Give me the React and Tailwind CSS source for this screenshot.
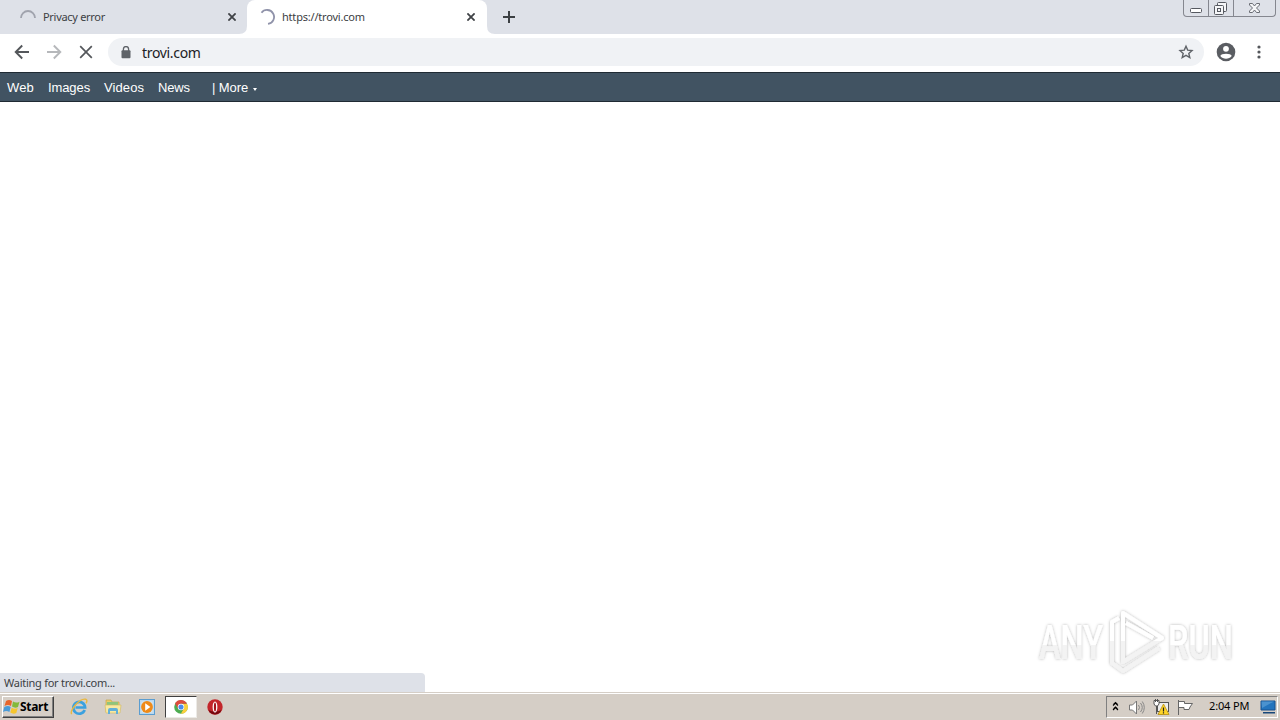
import React from 'react';

const Spinner = ({ d, color }) => (
  <svg width="16" height="16" viewBox="0 0 16 16" fill="none" className="shrink-0">
    <path d={d} stroke={color} strokeWidth="1.8" />
  </svg>
);

const CloseIcon = ({ className }) => (
  <svg width="8" height="8" viewBox="0 0 8 8" className={className}>
    <path d="M.4.4l7.2 7.2M7.6.4L.4 7.6" stroke="#3f4246" strokeWidth="1.8" />
  </svg>
);

const WindowButtons = () => (
  <div className="ml-auto mr-[4px] h-[17px] w-[93px] flex border border-t-0 border-[#85878f] rounded-b-[4px] overflow-hidden">
    <div className="w-[25px] border-r border-[#85878f]">
      <svg width="24" height="16" viewBox="0 0 24 16" fill="none">
        <rect x="6.5" y="8.5" width="11" height="4" rx="1" fill="#fff" stroke="#565960" />
      </svg>
    </div>
    <div className="w-[25px] border-r border-[#85878f]">
      <svg width="24" height="16" viewBox="0 0 24 16" fill="#f5f6f8" stroke="#565960">
        <rect x="8.5" y="2.5" width="9" height="9" rx="1" />
        <rect x="5.5" y="5.5" width="9" height="9" rx="1" />
        <rect x="8.5" y="8.5" width="3" height="3" />
      </svg>
    </div>
    <div className="flex-1">
      <svg width="41" height="16" viewBox="0 0 41 16">
        <path d="M15.5 3.5h3l2 2.5 2-2.5h3v1.5L22.5 8l3 3v1.5h-3l-2-2.5-2 2.5h-3V11l3-3-3-3z" fill="#f5f6f8" stroke="#6a6d74" />
      </svg>
    </div>
  </div>
);

const TabStrip = () => (
  <div className="h-[34px] bg-[#dee1e8] flex text-[11px] text-[#3c4043]">
    <div className="w-[247px] flex items-center pl-[20px] pr-[15px] relative">
      <Spinner d="M1 9A7 7 0 0 1 15 9" color="#a0a3ad" />
      <span className="ml-[7px] whitespace-nowrap tracking-[-0.3px]">Privacy error</span>
      <CloseIcon className="ml-auto mr-[-4px]" />
      <svg width="8" height="8" className="absolute right-0 bottom-0">
        <path d="M8 0v8H0Q8 8 8 0" fill="#fff" />
      </svg>
    </div>
    <div className="w-[240px] bg-white rounded-t-[8px] flex items-center pl-[12px] pr-[12px]">
      <Spinner d="M2.5 3.7A7 7 0 1 1 9 14.9" color="#9093aa" />
      <span className="ml-[7px] whitespace-nowrap tracking-[-0.2px]">https://trovi.com</span>
      <CloseIcon className="ml-auto" />
    </div>
    <div className="w-[43px] relative">
      <svg width="8" height="8" className="absolute left-0 bottom-0">
        <path d="M0 0v8h8Q0 8 0 0" fill="#fff" />
      </svg>
      <svg width="12" height="12" className="mt-[11px] ml-[16px]">
        <path d="M6 0v12M0 6h12" stroke="#3c4043" strokeWidth="2" />
      </svg>
    </div>
    <WindowButtons />
  </div>
);

const Toolbar = () => (
  <div className="h-[38px] bg-white flex items-center pb-[2px] pl-[14px]">
    <svg width="80" height="16" viewBox="0 0 80 16" fill="none" strokeWidth="1.9" className="shrink-0">
      <path d="M15 8H2M8.2 1.5L1.7 8l6.5 6.5" stroke="#54575b" />
      <path d="M33 8h13M39.8 1.5L46.3 8l-6.5 6.5" stroke="#b6b8bb" />
      <path d="M66.2 2.2l11.6 11.6M77.8 2.2L66.2 13.8" stroke="#54575b" strokeWidth="1.7" />
    </svg>
    <div className="ml-[14px] w-[1096px] h-[28px] rounded-full bg-[#f0f2f5] flex items-center pl-[13px] pr-[10px]">
      <svg width="10" height="13" viewBox="0 0 10 13" fill="none">
        <rect x="0.5" y="4.3" width="9" height="8" rx="1" fill="#5f6368" />
        <path d="M2.4 5V3.2a2.6 2.6 0 0 1 5.2 0V5" stroke="#5f6368" strokeWidth="1.3" />
      </svg>
      <span className="ml-[11px] text-[14px] text-[#202124] tracking-[-0.33px]">trovi.com</span>
      <svg width="16" height="16" viewBox="0 0 16 16" className="ml-auto">
        <path d="M8 2.2l1.7 3.9 4.3.4-3.2 2.9 1 4.2L8 11.4l-3.8 2.2 1-4.2L2 6.5l4.3-.4z" fill="none" stroke="#5f6368" strokeWidth="1.4" />
      </svg>
    </div>
    <svg width="20" height="20" viewBox="0 0 20 20" className="ml-[12px]">
      <circle cx="10" cy="10" r="9.3" fill="#5a5d62" />
      <circle cx="10" cy="6.8" r="2.9" fill="#fff" />
      <path d="M4.3 14c.5-3 11-3 11.4 0-2.6 3.5-8.8 3.5-11.4 0z" fill="#fff" />
    </svg>
    <svg width="4" height="14" viewBox="0 0 4 14" fill="#54575b" className="ml-[21px]">
      <circle cx="2" cy="2" r="1.6" />
      <circle cx="2" cy="7" r="1.6" />
      <circle cx="2" cy="12" r="1.6" />
    </svg>
  </div>
);

const NavBar = () => (
  <div className="h-[30px] bg-[#415362] border-y border-[#1f2a33] flex items-center pt-px text-[13px] text-white whitespace-nowrap font-['Liberation_Sans',sans-serif]">
    <span className="ml-[7px] w-[41px] tracking-[0.1px]">Web</span>
    <span className="w-[56px] tracking-[-0.1px]">Images</span>
    <span className="w-[54px] tracking-[0.1px]">Videos</span>
    <span className="w-[54px] tracking-[-0.15px]">News</span>
    <span className="tracking-[-0.1px]">| More</span>
    <svg width="4" height="3" className="ml-[5px] mt-[3px]">
      <path d="M0 0h4L2 3z" fill="#fff" />
    </svg>
  </div>
);

const Watermark = () => (
  <svg width="210" height="74" viewBox="0 0 210 74" className="absolute left-[1030px] top-[502px] overflow-visible">
    <defs>
      <linearGradient id="fade" x1="0" y1="0" x2="0" y2="1">
        <stop offset="0.55" stopColor="#fff" />
        <stop offset="0.55" stopColor="#f3f3f3" />
      </linearGradient>
      <linearGradient id="markFade" gradientUnits="userSpaceOnUse" x1="0" y1="0" x2="0" y2="74">
        <stop offset="0.5" stopColor="#fff" />
        <stop offset="0.5" stopColor="#f3f3f3" />
      </linearGradient>
      <filter id="glow" x="-10%" y="-20%" width="120%" height="140%">
        <feDropShadow dx="0" dy="0" stdDeviation="1.7" floodColor="#000" floodOpacity="0.3" />
      </filter>
    </defs>
    <g filter="url(#glow)" fontFamily="Roboto, sans-serif" fontSize="49" fontWeight="500" fill="url(#fade)">
      <text x="9" y="55" textLength="64" lengthAdjust="spacingAndGlyphs">ANY</text>
      <text x="138" y="55" textLength="65" lengthAdjust="spacingAndGlyphs">RUN</text>
      <g fill="none" stroke="url(#markFade)" strokeWidth="4" strokeLinejoin="round">
        <path d="M93 9v49l39-24z" />
        <path d="M89 14l-7 4v41l11 8 36-23M96 19l27 15" />
      </g>
    </g>
  </svg>
);

const StartFlag = () => (
  <svg width="17" height="16" viewBox="0 0 17 16">
    <path d="M3 2q3-2 6 0L8 7Q5 5 1.5 7z" fill="#e7652b" />
    <path d="M10 2.5q3 2 6.5.2L15 8q-3 1.5-6-.5z" fill="#83b939" />
    <path d="M1.3 8Q5 6 7.7 8l-1.3 5Q3.3 11 0 13z" fill="#4a9bd8" />
    <path d="M8.7 8.7q3 2 6 .4l-1.4 5q-3 1.5-6-.5z" fill="#f6c62e" />
  </svg>
);

const QuickLaunch = () => (
  <>
    <svg width="18" height="18" viewBox="0 0 18 18" fill="none" className="ml-[16px]">
      <path d="M14.7 12A5.9 5.9 0 1 1 15.1 9.5H5.5" stroke="#3ba1df" strokeWidth="2.7" />
      <path d="M1.7 16.2C-.5 13 9-.3 16 1.3c1.5.6.8 3 0 4" stroke="#e9b83e" strokeWidth="1.4" />
    </svg>
    <svg width="18" height="18" viewBox="0 0 18 18" className="ml-[16px]">
      <path d="M2 2h5l1 2h7v10H2z" fill="#e9cd69" stroke="#c9a845" strokeWidth=".7" />
      <path d="M3 4h11v4H3z" fill="#8ec57c" />
      <path d="M1 7h16l-1 8H2z" fill="#f8e9a1" stroke="#d1b961" strokeWidth=".6" />
      <path d="M4 16v-4q0-2 2-2h6q2 0 2 2v4h-2v-3H6v3z" fill="#61afd8" />
    </svg>
    <svg width="18" height="18" viewBox="0 0 18 18" className="ml-[16px]">
      <rect x="1.5" y="1.5" width="15" height="15" fill="#b9d8ef" stroke="#5b9dd0" />
      <rect x="3.5" y="3.5" width="11" height="11" fill="#d9e6ee" />
      <circle cx="9" cy="9" r="5.9" fill="#ef8a18" />
      <path d="M7.2 5.2l5.2 3.8-5.2 3.8z" fill="#fff" />
    </svg>
    <div className="ml-[9px] w-[32px] h-[22px] bg-white border border-t-[#404040] border-l-[#404040] border-r-[#eceae6] border-b-[#eceae6] flex items-center justify-center">
      <svg width="14" height="14" viewBox="0 0 16 16">
        <circle cx="8" cy="8" r="7.8" fill="#4cac51" />
        <path d="M8 4.3h6.9A7.8 7.8 0 0 1 7.8 15.8L11.3 9.8z" fill="#fbcf3c" />
        <path d="M1.2 4l3.6 6L8 4.3l6.8-.1A7.8 7.8 0 0 0 1.2 4z" fill="#dd4b3e" />
        <circle cx="8" cy="8" r="3.7" fill="#fff" />
        <circle cx="8" cy="8" r="2.9" fill="#4a8bec" />
      </svg>
    </div>
    <svg width="16" height="16" viewBox="0 0 16 16" className="ml-[10px]">
      <circle cx="8" cy="8" r="7.7" fill="#c3262b" />
      <path d="M1.5 11A7 7 0 0 0 14.5 11Q8 14 1.5 11z" fill="#76070d" />
      <ellipse cx="8" cy="8" rx="2.4" ry="5.5" fill="#fff" />
      <ellipse cx="8" cy="8" rx="1.1" ry="4.6" fill="#a3141b" />
    </svg>
  </>
);

const Tray = () => (
  <div className="ml-auto mr-[2px] w-[172px] h-[22px] border border-t-[#808080] border-l-[#808080] border-r-white border-b-white flex items-center">
    <svg width="88" height="20" viewBox="0 0 88 20" fill="none">
      <path d="M6 8.5l2.5-2.5L11 8.5M6 13l2.5-2.5L11 13M6.5 7.5l2-2 2 2M6.5 12l2-2 2 2" stroke="#000" strokeWidth="1.1" />
      <path d="M22.5 8h3l4-4v13l-4-4h-3z" fill="#fff" stroke="#777" />
      <path d="M31.5 8q2 2.5 0 5M33.5 6q3.5 4.5 0 9M35.3 4.5q4 6 0 12" stroke="#888" />
      <rect x="50.5" y="5.5" width="11" height="9" fill="#eee" stroke="#555" />
      <path d="M51 17h7" stroke="#555" />
      <path d="M47 3.5h5v3.5l-1.5 2h-2L47 7z" fill="#fff" stroke="#555" />
      <path d="M48.5 2v3M50.5 2v3M49.5 9v8" stroke="#555" />
      <path d="M56.5 7l5.5 10.5H51z" fill="#ffd529" stroke="#b99111" strokeWidth=".8" />
      <path d="M56.5 10.5v4M56.5 15.2v1.2" stroke="#222" strokeWidth="1.2" />
      <path d="M71.5 3v15M71.5 4.5h6v2h8l-2.5 3.5-1 2.5h-5v-2h-5.5" fill="#fff" stroke="#666" />
    </svg>
    <span className="ml-[14px] w-[42px] whitespace-nowrap text-[11px] text-black tracking-[-0.15px]">2:04 PM</span>
    <svg width="16" height="14" viewBox="0 0 16 14" className="ml-[9px]">
      <path d="M1 1h14v9H1z" fill="#2474bd" stroke="#18518e" />
      <path d="M1.5 1.5H14L2 8z" fill="#4b92cf" />
      <path d="M3 12h12v1.5H3z" fill="#174779" />
    </svg>
  </div>
);

const Taskbar = () => (
  <div className="h-[28px] bg-[#d5cec6] border-t border-[#d5cec6] shadow-[inset_0_1px_0_#fff] pt-px pb-px flex items-center">
    <div className="ml-[2px] w-[52px] h-[22px] border border-t-white border-l-white border-r-[#404040] border-b-[#404040] shadow-[inset_-1px_-1px_0_#808080] flex items-center">
      <StartFlag />
      <span className="text-[12px] font-bold text-black tracking-[-0.3px]">Start</span>
    </div>
    <QuickLaunch />
    <Tray />
  </div>
);

const App = () => (
  <div className="w-[1280px] h-[720px] overflow-hidden bg-white flex flex-col font-['Noto_Sans',sans-serif]">
    <TabStrip />
    <Toolbar />
    <NavBar />
    <div className="h-[590px] relative flex items-end">
      <Watermark />
      <div className="w-[425px] h-[19px] bg-[#dee1e8] rounded-tr-[4px] flex items-center pt-px pl-[4px] text-[11px] text-[#3c4043] tracking-[-0.26px]">
        Waiting for trovi.com...
      </div>
    </div>
    <Taskbar />
  </div>
);

export default App;
